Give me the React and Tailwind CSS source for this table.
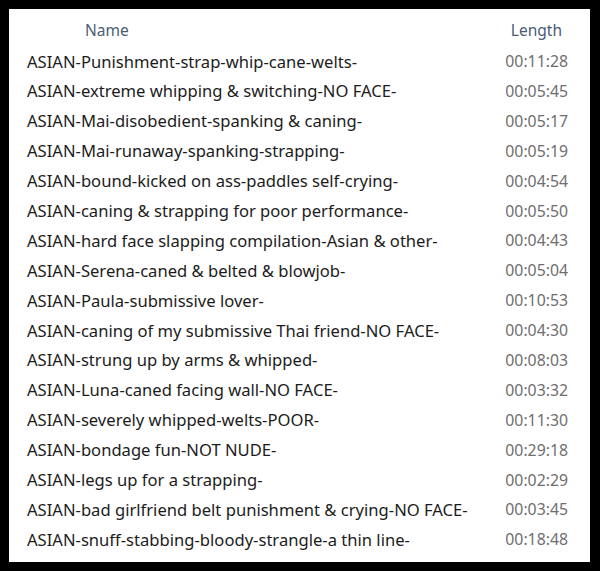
const rows = [
  ["ASIAN-Punishment-strap-whip-cane-welts-", "00:11:28"],
  ["ASIAN-extreme whipping & switching-NO FACE-", "00:05:45"],
  ["ASIAN-Mai-disobedient-spanking & caning-", "00:05:17"],
  ["ASIAN-Mai-runaway-spanking-strapping-", "00:05:19"],
  ["ASIAN-bound-kicked on ass-paddles self-crying-", "00:04:54"],
  ["ASIAN-caning & strapping for poor performance-", "00:05:50"],
  ["ASIAN-hard face slapping compilation-Asian & other-", "00:04:43"],
  ["ASIAN-Serena-caned & belted & blowjob-", "00:05:04"],
  ["ASIAN-Paula-submissive lover-", "00:10:53"],
  ["ASIAN-caning of my submissive Thai friend-NO FACE-", "00:04:30"],
  ["ASIAN-strung up by arms & whipped-", "00:08:03"],
  ["ASIAN-Luna-caned facing wall-NO FACE-", "00:03:32"],
  ["ASIAN-severely whipped-welts-POOR-", "00:11:30"],
  ["ASIAN-bondage fun-NOT NUDE-", "00:29:18"],
  ["ASIAN-legs up for a strapping-", "00:02:29"],
  ["ASIAN-bad girlfriend belt punishment & crying-NO FACE-", "00:03:45"],
  ["ASIAN-snuff-stabbing-bloody-strangle-a thin line-", "00:18:48"],
];

export default function App() {
  return (
    <div className="w-[600px] h-[571px] bg-black p-[9px] pr-[10px]" style={{ fontFamily: '"Noto Sans", sans-serif' }}>
      <div className="bg-white h-full flex flex-col pb-[5px]">
        <div className="h-[38px] pt-[5px] flex items-center justify-between pl-[76px] pr-[28px] text-[15.5px] text-[#4a5d75]">
          <span>Name</span>
          <span>Length</span>
        </div>
        {rows.map(([name, len], i) => (
          <div key={i} className="h-[29.9px] flex items-center justify-between pl-[18px] pr-[22px]">
            <span className="text-[16.6px] text-[#1c1c1c]">{name}</span>
            <span className="text-[15.8px] text-[#6e6e6e]">{len}</span>
          </div>
        ))}
      </div>
    </div>
  );
}
